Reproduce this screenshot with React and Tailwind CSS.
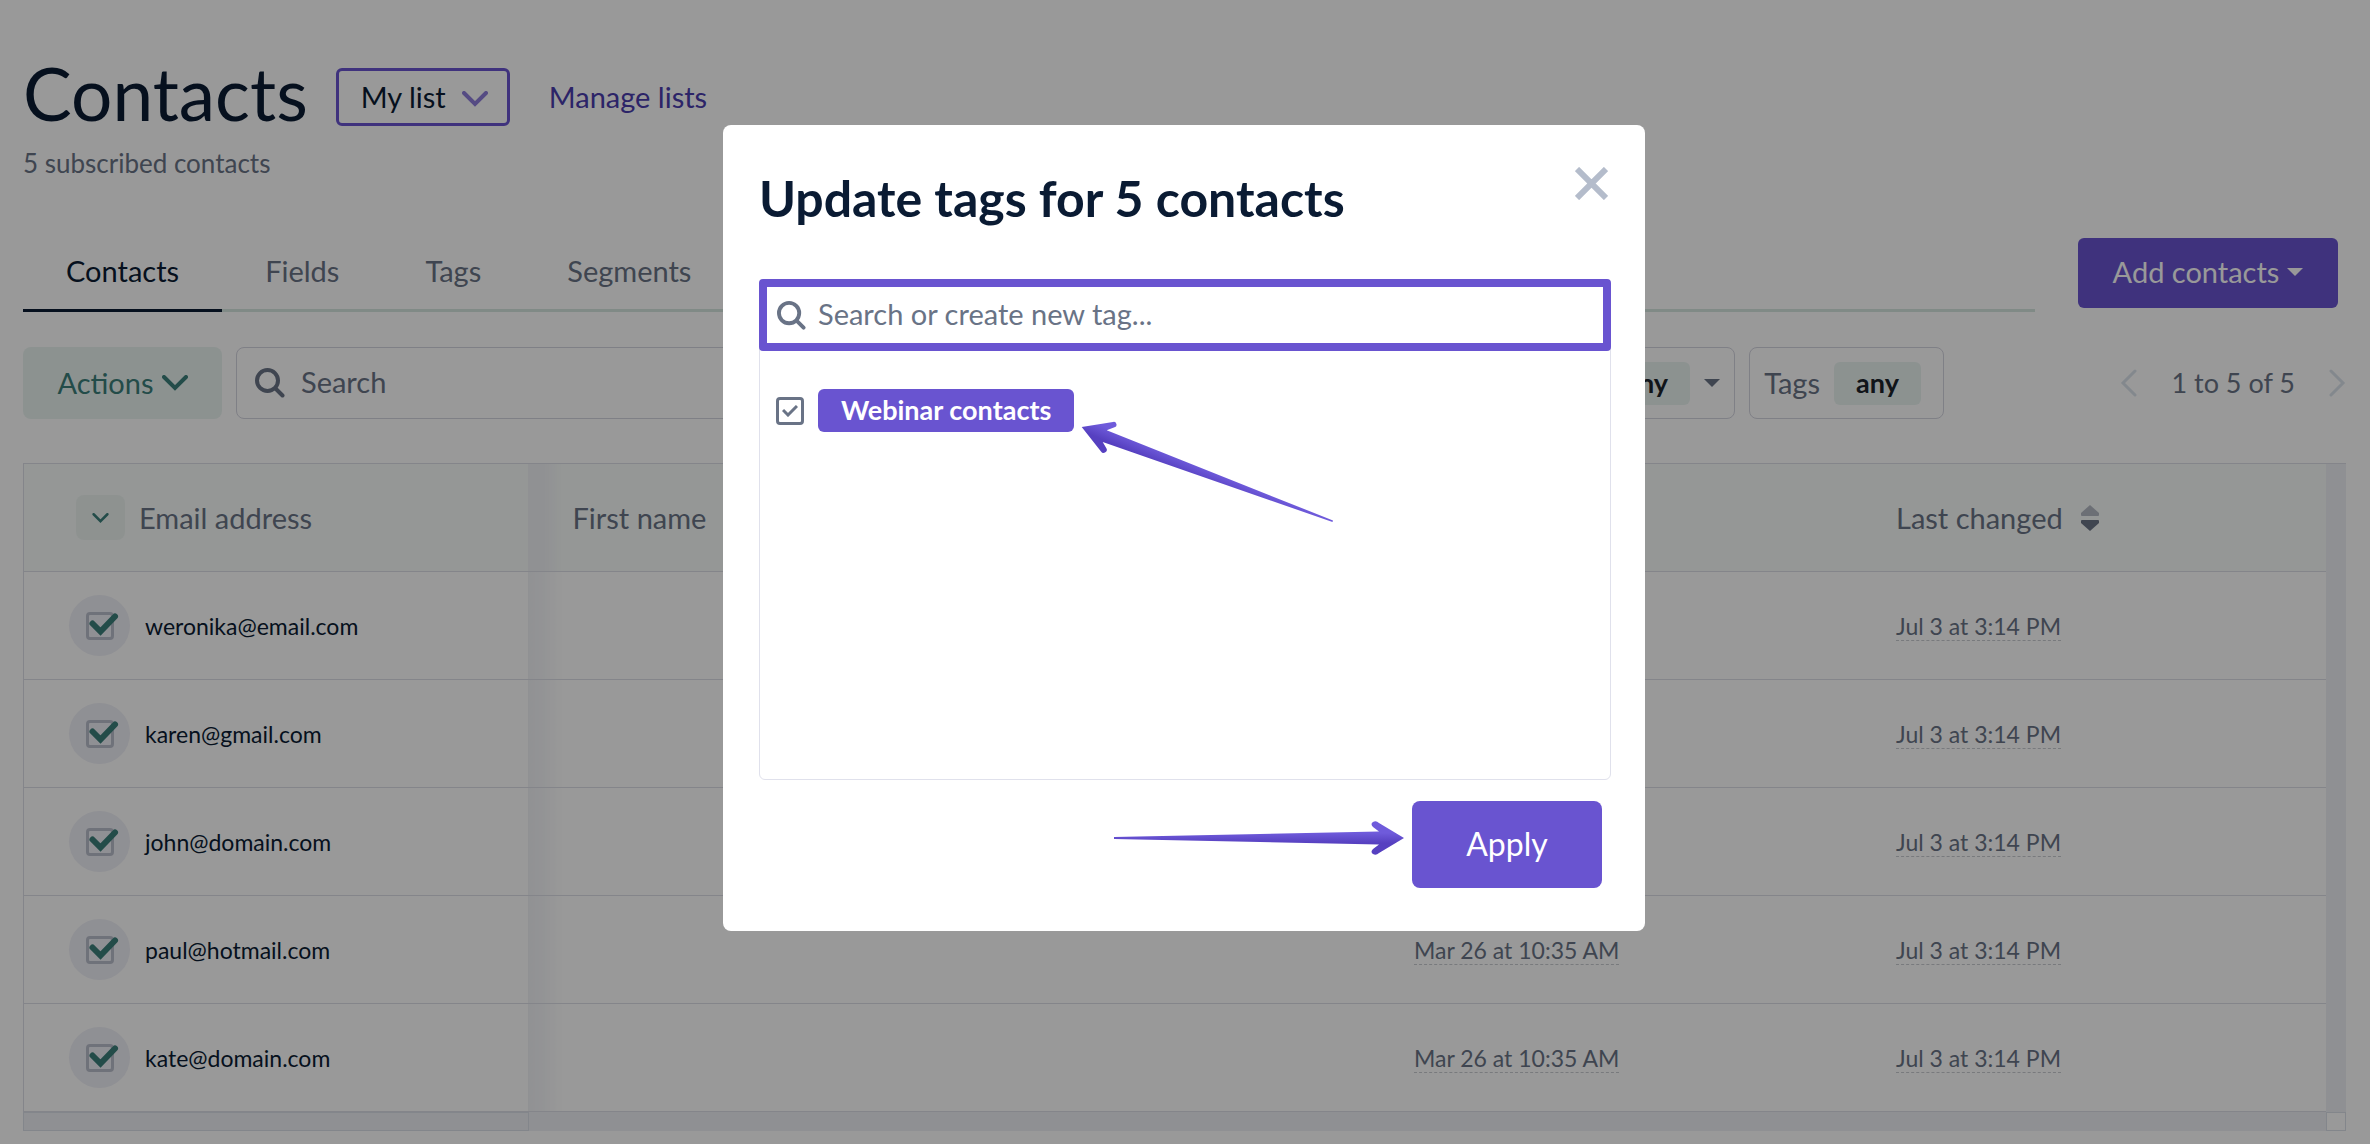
import React, { useState } from 'react';

const CONTACTS = [
  { email: 'weronika@email.com', subscribed: 'Mar 26 at 10:35 AM', changed: 'Jul 3 at 3:14 PM' },
  { email: 'karen@gmail.com', subscribed: 'Mar 26 at 10:35 AM', changed: 'Jul 3 at 3:14 PM' },
  { email: 'john@domain.com', subscribed: '', changed: 'Jul 3 at 3:14 PM' },
  { email: 'paul@hotmail.com', subscribed: 'Mar 26 at 10:35 AM', changed: 'Jul 3 at 3:14 PM' },
  { email: 'kate@domain.com', subscribed: 'Mar 26 at 10:35 AM', changed: 'Jul 3 at 3:14 PM' },
];

const TABS = ['Contacts', 'Fields', 'Tags', 'Segments'];

function Chevron({ className, strokeWidth = 4 }) {
  return (
    <svg viewBox="0 0 26 16" className={className} fill="none" stroke="currentColor" strokeWidth={strokeWidth} strokeLinecap="round" strokeLinejoin="miter" aria-hidden="true">
      <path d="M2 2l11 11L24 2" />
    </svg>
  );
}

function SearchIcon({ className }) {
  return (
    <svg viewBox="0 0 30 30" className={className} fill="none" stroke="currentColor" strokeWidth="4" strokeLinecap="round" aria-hidden="true">
      <circle cx="12.5" cy="12.5" r="10.5" />
      <path d="M20.5 20.5l7 7" />
    </svg>
  );
}

function Caret({ className }) {
  return (
    <svg viewBox="0 0 16 8" className={className} fill="currentColor" aria-hidden="true">
      <path d="M0 0h16l-8 8z" />
    </svg>
  );
}

function FilterButton({ label, caret }) {
  return (
    <button
      type="button"
      className={
        caret
          ? 'flex h-[72px] items-center gap-[14px] rounded-lg border border-[#d4d5e0] px-[14px] text-[#697386]'
          : 'flex h-[72px] items-center gap-[14px] rounded-lg border border-[#d4d5e0] pr-[22px] pl-[14px] text-[#697386]'
      }
    >
      {label}
      <span className="flex h-[43px] w-[87px] items-center justify-center rounded-md bg-[#eaf4f1] text-[27px] font-bold text-[#1c232b]">
        any
      </span>
      {caret && <Caret className="h-2 w-4" />}
    </button>
  );
}

function Header() {
  return (
    <header>
      <div className="flex items-end pt-[60px]">
        <h1 className="text-[73px] leading-[66px] text-[#0a1b33]">Contacts</h1>
        <div className="relative ml-7">
          <select aria-label="Contact list" className="h-[58px] w-[174px] appearance-none rounded-md border-3 border-[#6954d0] bg-white pl-[22px] text-[#0a1b33]">
            <option>My list</option>
          </select>
          <Chevron className="pointer-events-none absolute top-[23px] right-[22px] h-4 w-[26px] text-[#8e7ddb]" />
        </div>
        <a href="#lists" className="ml-[39px] flex h-[58px] items-center text-[#4a3cae]">Manage lists</a>
      </div>
      <p className="mt-[21px] text-[26px] leading-8 text-[#697386]">5 subscribed contacts</p>
    </header>
  );
}

function TabBar() {
  return (
    <div className="mt-[55px] flex items-center gap-[43px] pr-2">
      <nav className="flex h-[78px] flex-1 shadow-[inset_0_-3px_0_#d5e6e0]">
        {TABS.map((tab, i) => (
          <a
            key={tab}
            href={`#${tab.toLowerCase()}`}
            className={
              i === 0
                ? 'flex items-center border-b-3 border-[#0a1b33] px-[43px] pb-0.5 text-[#0a1b33]'
                : 'flex items-center border-b-3 border-transparent px-[43px] pb-0.5 text-[#697386]'
            }
          >
            {tab}
          </a>
        ))}
      </nav>
      <button type="button" className="flex h-[70px] w-[260px] items-center justify-center gap-2 rounded-md bg-[#6954d0] pb-0.5 text-white">
        Add contacts
        <Caret className="h-2 w-4" />
      </button>
    </div>
  );
}

function Toolbar() {
  return (
    <div className="mt-[35px] flex items-center gap-[14px]">
      <button type="button" className="flex h-[72px] w-[199px] items-center justify-center gap-2 rounded-lg bg-[#eaf4f1] text-[#3b7f7a]">
        Actions
        <Chevron className="h-4 w-[26px]" />
      </button>
      <label className="flex h-[72px] flex-1 items-center gap-4 rounded-lg border border-[#d4d5e0] px-[18px] text-[#697386]">
        <SearchIcon className="size-[30px]" />
        <input type="search" aria-label="Search contacts" placeholder="Search" className="min-w-0 flex-1 pb-0.5 outline-none placeholder:text-[#697386]" />
      </label>
      <FilterButton label="Status" caret />
      <FilterButton label="Tags" />
      <div className="flex w-[388px] items-center justify-end gap-[34px] text-[27px] text-[#697386]">
        <button type="button" aria-label="Previous page" className="text-[#dbe3ec]">
          <svg viewBox="0 0 17 28" className="h-7 w-[17px]" fill="none" stroke="currentColor" strokeWidth="3" strokeLinecap="round">
            <path d="M15 2L3 14l12 12" />
          </svg>
        </button>
        1 to 5 of 5
        <button type="button" aria-label="Next page" className="text-[#dbe3ec]">
          <svg viewBox="0 0 17 28" className="h-7 w-[17px]" fill="none" stroke="currentColor" strokeWidth="3" strokeLinecap="round">
            <path d="M2 2l12 12L2 26" />
          </svg>
        </button>
      </div>
    </div>
  );
}

function RowCheckbox({ email }) {
  return (
    <span className="grid size-[61px] shrink-0 place-items-center rounded-full bg-[#eff0f7]">
      <input
        type="checkbox"
        defaultChecked
        aria-label={`Select ${email}`}
        className="size-7 appearance-none rounded-sm border-3 border-[#b9bfcc] [grid-area:1/1]"
      />
      <svg viewBox="0 0 32 32" className="pointer-events-none size-8 overflow-visible [grid-area:1/1]" fill="none" stroke="#3b7f7a" strokeWidth="6" strokeLinecap="round" aria-hidden="true">
        <path d="M8.500 13.500l8 8L31 6.500" />
      </svg>
    </span>
  );
}

function DateText({ children }) {
  return <span className="border-b border-dashed border-[#c9cbd0] text-[23px] text-[#697386]">{children}</span>;
}

function ContactsTable() {
  return (
    <div className="mt-11 grid grid-cols-[1fr_20px]">
      <table className="w-full table-fixed border-collapse text-left">
        <colgroup>
          <col className="w-[504px]" />
          <col />
          <col />
          <col className="w-[482px]" />
          <col className="w-[475px]" />
        </colgroup>
        <thead>
          <tr className="h-[108px] border-t border-b border-[#dcdee6] bg-[#f8fcfa] text-[#697386]">
            <th className="border-l border-[#dcdee6] pl-[52px] font-normal">
              <div className="flex items-center gap-[14px]">
                <button type="button" aria-label="Select contacts" className="flex h-[45px] w-[49px] items-center justify-center rounded-lg bg-[#edf4f1] text-[#3b7f7a]">
                  <Chevron className="h-[10px] w-[17px]" />
                </button>
                Email address
              </div>
            </th>
            <th className="bg-linear-to-r from-[#f1f2f6] via-[#f1f2f6] via-4% to-transparent to-8% pl-[45px] font-normal">First name</th>
            <th className="pl-[45px] font-normal">Last name</th>
            <th className="pl-[45px] font-normal">Date added</th>
            <th className="pl-[45px] font-normal">
              <div className="flex items-center gap-[18px]">
                Last changed
                <svg viewBox="0 0 18 26" className="h-[26px] w-[18px]" aria-hidden="true">
                  <path d="M9 0l9 8v2q0 1-1 1H1q-1 0-1-1V8z" fill="#b4b9c4" />
                  <path d="M9 26l9-8v-2q0-1-1-1H1q-1 0-1 1v2z" fill="#697386" />
                </svg>
              </div>
            </th>
          </tr>
        </thead>
        <tbody>
          {CONTACTS.map(c => (
            <tr key={c.email} className="h-[108px] border-b border-[#dcdee6]">
              <td className="border-l border-[#dcdee6] pl-[45px]">
                <div className="flex items-center gap-[15px] text-[23px] text-[#0a1b33]">
                  <RowCheckbox email={c.email} />
                  {c.email}
                </div>
              </td>
              <td className="bg-linear-to-r from-[#f1f2f6] via-[#f6f7f9] via-4% to-transparent to-8%"></td>
              <td></td>
              <td className="pb-0.5 pl-[45px]">{c.subscribed && <DateText>{c.subscribed}</DateText>}</td>
              <td className="pb-0.5 pl-[45px]"><DateText>{c.changed}</DateText></td>
            </tr>
          ))}
        </tbody>
      </table>
      {/* scroll gutters */}
      <div className="border-t border-[#dcdee6] bg-[#eff0f5]"></div>
      <div className="flex h-[19px] bg-[#eff0f5]">
        <div className="w-[506px] border border-[#dbe0e8]"></div>
      </div>
      <div className="border border-[#dbe0e8]"></div>
    </div>
  );
}

function UpdateTagsModal() {
  const [checked, setChecked] = useState(true);

  return (
    <div role="dialog" aria-labelledby="modal-title" className="relative w-[922px] rounded-lg bg-white pt-[42px] pr-[34px] pb-[43px] pl-9">
      <div className="flex justify-between">
        <h2 id="modal-title" className="text-[50px] leading-[62px] font-bold text-[#0a1b33]">
          Update tags for 5 contacts
        </h2>
        <button type="button" aria-label="Close" className="mr-[3px] flex h-[33px] text-[#b4bccb]">
          <svg viewBox="0 0 33 33" className="size-[33px]" fill="none" stroke="currentColor" strokeWidth="6">
            <path d="M2 2l29 29M31 2L2 31" />
          </svg>
        </button>
      </div>

      <div className="mt-[50px] flex h-[501px] flex-col rounded-md border border-[#e0e1ec]">
        <label className="-mx-px -mt-px flex h-[72px] items-center gap-3 rounded-sm border-8 border-[#6954d0] px-[10px] text-[#697386]">
          <SearchIcon className="size-[29px]" />
          <input type="text" aria-label="Search or create new tag" placeholder="Search or create new tag..." className="min-w-0 flex-1 pb-0.5 outline-none placeholder:text-[#697386]" />
        </label>
        <label className="mt-[38px] flex items-center gap-[14px] px-4">
          <span className="grid place-items-center">
            <input
              type="checkbox"
              checked={checked}
              onChange={e => setChecked(e.target.checked)}
              className="size-7 appearance-none rounded-sm border-3 border-[#697386] [grid-area:1/1]"
            />
            {checked && (
              <svg viewBox="0 0 16 12" className="pointer-events-none h-3 w-4 [grid-area:1/1]" fill="none" stroke="#697386" strokeWidth="3" aria-hidden="true">
                <path d="M1 5l5 5 9-9" />
              </svg>
            )}
          </span>
          <span className="flex h-[43px] items-center rounded-md bg-[#6954d0] px-[23px] pb-0.5 text-[27px] font-bold text-white">
            Webinar contacts
          </span>
        </label>
      </div>

      <div className="mt-[21px] mr-[9px] flex items-center justify-end gap-2">
        <svg viewBox="0 0 290 34" className="mb-[14px] h-[34px] w-[290px]" aria-hidden="true">
          <defs>
            <linearGradient id="arrow-h" x1="0" y1="0" x2="0" y2="1">
              <stop offset="0.35" stopColor="#6f5bdb" />
              <stop offset="0.65" stopColor="#5640c0" />
            </linearGradient>
          </defs>
          <path d="M0 16L265 10.500L259 6Q256 3 259 1Q262 -1 265 2L290 17L265 32Q262 35 259 33Q256 31 259 28L265 23.500L0 18Z" fill="url(#arrow-h)" />
        </svg>
        <button type="button" className="h-[87px] w-[190px] rounded-lg bg-[#6954d0] pb-0.5 text-[32px] text-white">
          Apply
        </button>
      </div>

      {/* pointer drawn over the tag list */}
      <svg viewBox="0 0 254 104" className="pointer-events-none absolute top-[295px] left-[357px] h-[104px] w-[254px]" aria-hidden="true">
        <defs>
          <linearGradient id="arrow-d" gradientUnits="userSpaceOnUse" x1="62" y1="22" x2="57" y2="34">
            <stop offset="0" stopColor="#6f5bdb" />
            <stop offset="1" stopColor="#5640c0" />
          </linearGradient>
        </defs>
        <path d="M1.700 7L33 2A2.700 2.700 0 0 1 34.500 7.300L26.700 10.300L253 100.500L252.500 102L22.700 22L26.200 28A2.900 2.900 0 0 1 21 31.500Z" fill="url(#arrow-d)" />
      </svg>
    </div>
  );
}

export default function App() {
  return (
    <div className="min-h-screen bg-white font-[Lato,sans-serif] text-[29px] leading-[34px]">
      <main className="pr-6 pb-[13px] pl-[23px]">
        <Header />
        <TabBar />
        <Toolbar />
        <ContactsTable />
      </main>
      <div className="fixed inset-0 flex items-start justify-center bg-black/40 pt-[125px] pr-0.5">
        <UpdateTagsModal />
      </div>
    </div>
  );
}
